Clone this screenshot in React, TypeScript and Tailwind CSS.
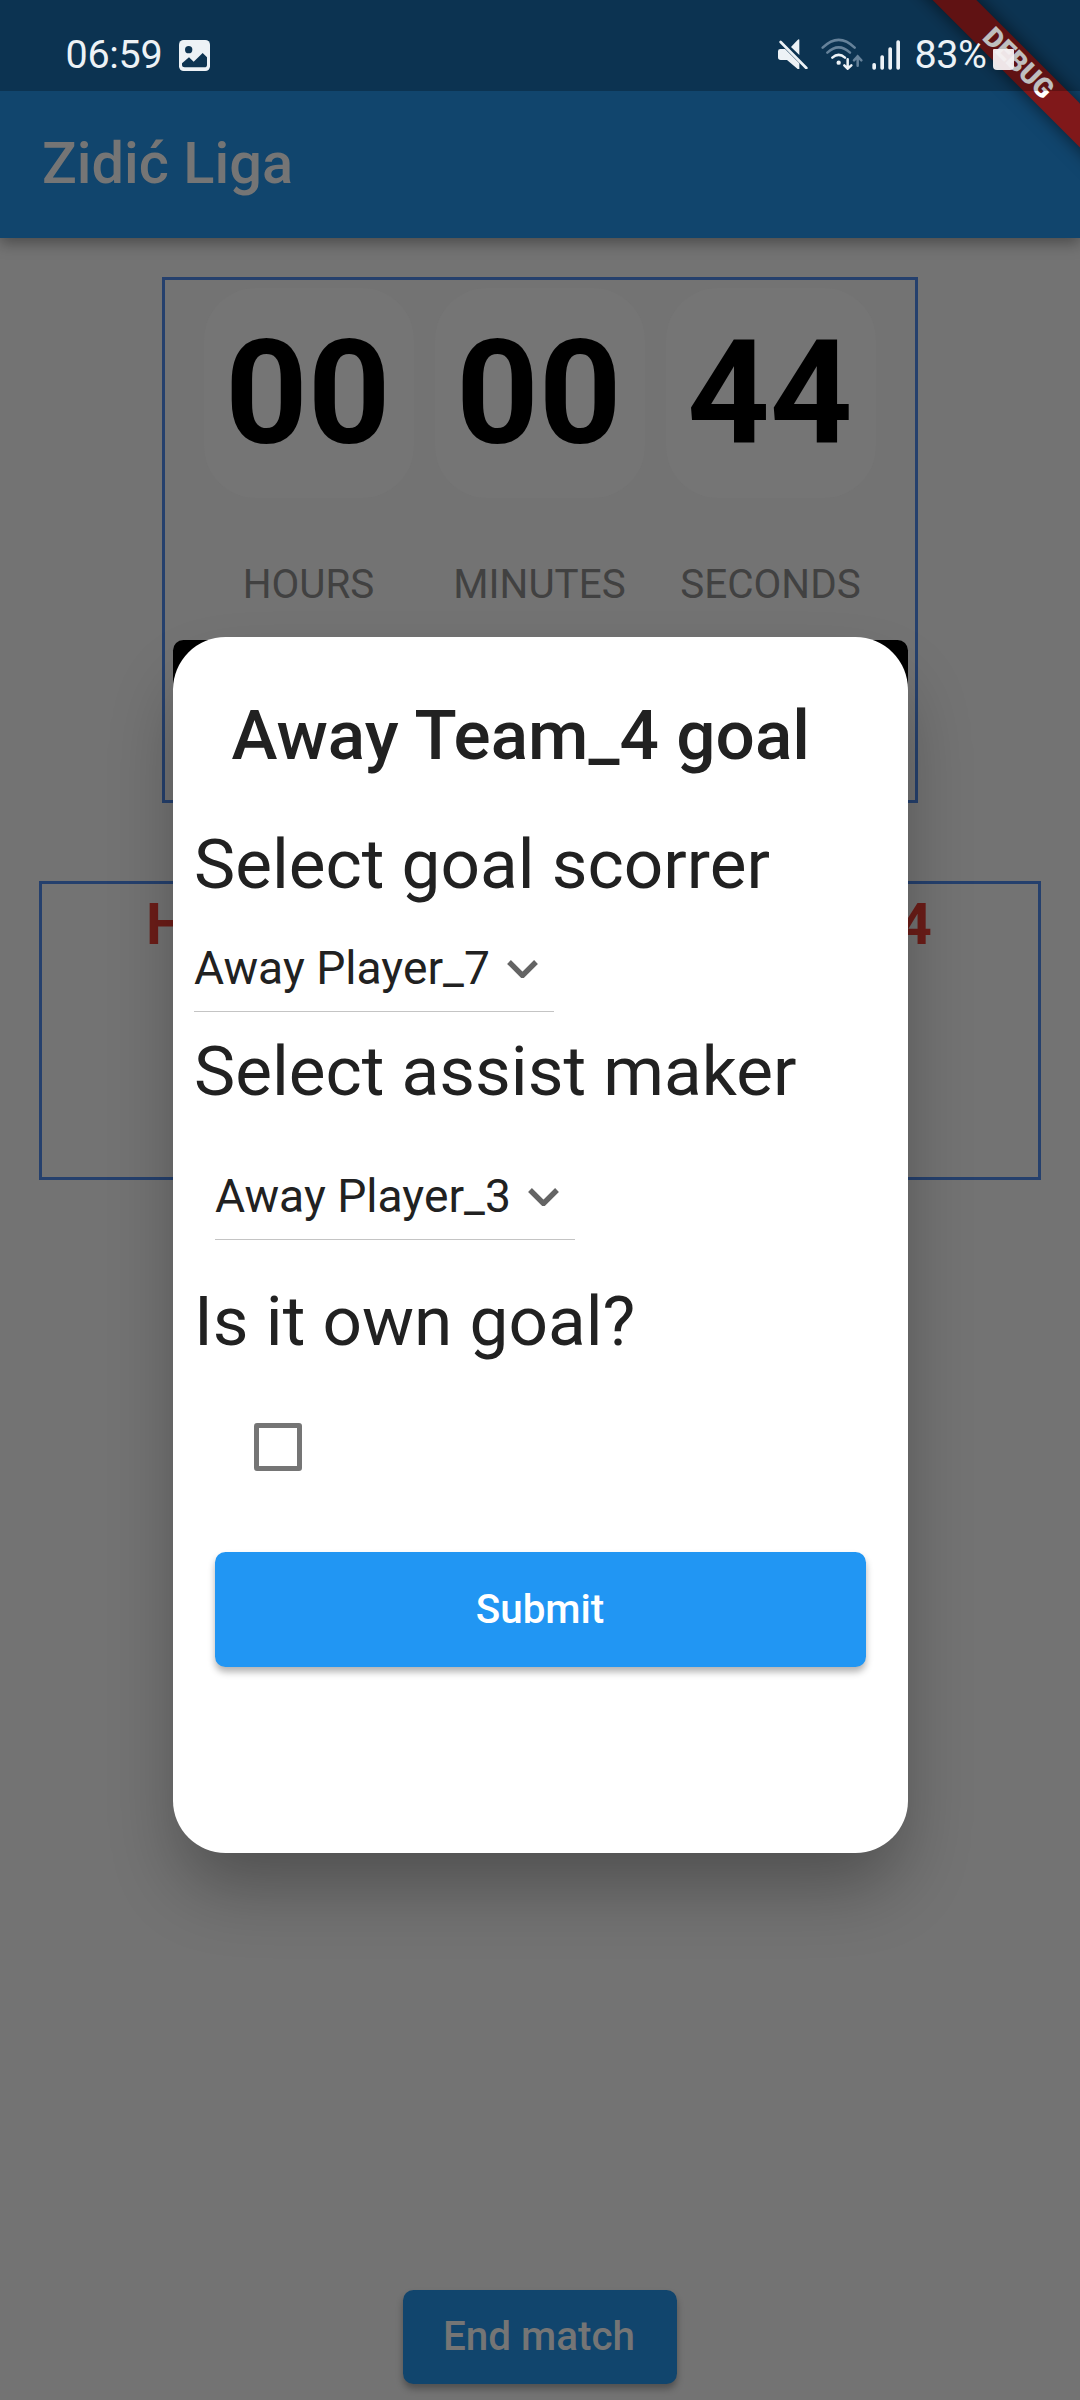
import type { ReactNode } from "react";

function ImageIcon() {
  return (
    <svg className="block h-[31px] w-[31px] shrink-0" viewBox="0 0 93 93">
      <rect width="93" height="93" rx="14" fill="#edf2f6" />
      <circle cx="29" cy="29" r="11" fill="#0d3452" />
      <path d="M9 70 L30 52 L44 65 L71 39 L84 52 V74 Q84 82 76 82 H17 Q9 82 9 76Z" fill="#0d3452" />
    </svg>
  );
}

function MuteIcon() {
  return (
    <svg className="block h-[30px] w-[30px] shrink-0" viewBox="114 117 90 90" fill="#edf2f6">
      <path d="M114 154 q0 -7 7 -7 h14 L178 190 V207 h-5 L141 180 H122 q-8 0 -8 -8Z" />
      <path d="M178 118 V165 L153 141 L172 121 Q178 115 178 120Z" />
      <path d="M122 126 L199 204" stroke="#edf2f6" strokeWidth="8" strokeLinecap="round" />
    </svg>
  );
}

function WifiIcon() {
  return (
    <svg className="block h-[32px] w-[42px] shrink-0" viewBox="244 115 126 96" fill="none" strokeWidth="7.5" strokeLinecap="round">
      <g stroke="#66829a">
        <path d="M249 144 Q297 97 345 144" />
        <path d="M263 159 Q297 127 331 159" />
        <path d="M354 198 V170 M343 182 L354 170 L365 182" />
      </g>
      <g stroke="#edf2f6">
        <path d="M278 174 Q297 157 316 174" />
        <path d="M324 179 V206 M314 197 L324 207 L335 197" />
      </g>
      <circle cx="297" cy="189" r="6.5" fill="#edf2f6" />
    </svg>
  );
}

function SignalIcon() {
  return (
    <svg className="block h-[30px] w-[28px] shrink-0" viewBox="396 119 84 90" fill="#edf2f6">
      <rect x="397" y="188" width="11" height="20" rx="5" />
      <rect x="421" y="165" width="11" height="43" rx="5" />
      <rect x="445" y="141" width="11" height="67" rx="5" />
      <rect x="469" y="120" width="11" height="88" rx="5" />
    </svg>
  );
}

function StatusBar() {
  return (
    <header className="absolute inset-x-0 top-0 z-20 flex h-[91px] bg-black/25 text-[39.5px] leading-[40px] text-[#edf2f6]">
      <span className="ml-[65.5px] mt-[34.5px] w-[99px] whitespace-nowrap tracking-[-0.3px]">06:59</span>
      <div className="ml-[14.5px] mt-[40px]"><ImageIcon /></div>
      <div className="ml-[568px] mt-[39px]"><MuteIcon /></div>
      <div className="ml-[13px] mt-[38px]"><WifiIcon /></div>
      <div className="ml-[9px] mt-[40px]"><SignalIcon /></div>
      <span className="ml-[14.5px] mt-[34.5px] w-[74.5px] whitespace-nowrap tracking-[-0.4px]">83%</span>
      <div className="ml-[4px] mt-[49px] h-[21px] w-[21px] rounded-b-[4px] rounded-t-[1px] bg-[#f6f1f2]/95" />
    </header>
  );
}

function DebugBanner() {
  return (
    <div className="absolute right-0 top-0 z-10 h-[190px] w-[240px] overflow-hidden">
      <div className="absolute left-[27px] top-[46.5px] flex h-[31px] w-[300px] rotate-45 items-center justify-center bg-[#80181a] pl-[3px] text-[27.2px] font-black leading-none text-white shadow-[0_0_18px_rgba(0,0,0,0.6)]">
        DEBUG
      </div>
    </div>
  );
}

function TimeUnit({ value, label }: { value: string; label: string }) {
  return (
    <div className="flex w-[210px] flex-col items-center">
      <div className="flex h-[210px] w-full items-center justify-center rounded-[52px] bg-[#757575] pr-[2.5px] pt-[2.5px] text-[144.4px] font-bold leading-[170px] text-black">
        {value}
      </div>
      <span className="mt-[63px] pr-[1px] text-[40.4px] leading-[48px] text-[#414141]">{label}</span>
    </div>
  );
}

function Dropdown({ children, className }: { children: ReactNode; className: string }) {
  return (
    <div className={`flex h-[87px] w-[360px] items-center border-b-[1.4px] border-[#c4c4c4] text-[46.2px] leading-[54px] ${className}`}>
      <span className="w-[313px] whitespace-nowrap">{children}</span>
      <svg className="h-[20px] w-[31px] shrink-0" viewBox="0 0 31 20">
        <path d="M2 4 L15.5 17.5 L29 4" fill="none" stroke="#646464" strokeWidth="5.4" />
      </svg>
    </div>
  );
}

function GoalDialog() {
  return (
    <section className="absolute left-[172.5px] top-[637.3px] z-10 flex h-[1216px] w-[735px] flex-col rounded-[52.5px] bg-white px-[21.5px] text-[69.3px] leading-[80px] text-[#212121] shadow-[0_40px_70px_-8px_rgba(0,0,0,0.31)]">
      <h2 className="ml-[37.5px] mt-[59px] whitespace-nowrap font-medium tracking-[0.05px]">Away Team_4 goal</h2>
      <p className="mt-[48.7px] whitespace-nowrap">Select goal scorrer</p>
      <Dropdown className="mt-[20px]">Away Player_7</Dropdown>
      <p className="mt-[20px] whitespace-nowrap">Select assist maker</p>
      <Dropdown className="ml-[21px] mt-[41px]">Away Player_3</Dropdown>
      <p className="mt-[42.3px] whitespace-nowrap">Is it own goal?</p>
      <div className="ml-[60.3px] mt-[61px] h-[47.4px] w-[47.4px] rounded-[3px] border-[5.25px] border-[#757575]" />
      <button className="mx-[20.5px] mt-[81px] flex h-[115.3px] items-center justify-center rounded-[10.5px] bg-[#2196f3] pt-[2px] text-[40.4px] font-medium leading-[48px] text-white shadow-[0_5px_7px_rgba(0,0,0,0.3)]">
        Submit
      </button>
    </section>
  );
}

export default function App() {
  return (
    <div className="relative flex h-[2400px] w-[1080px] flex-col items-center overflow-hidden bg-[#737373] font-['Roboto',sans-serif]">
      <StatusBar />
      <DebugBanner />
      <div className="flex h-[238px] w-full shrink-0 items-center bg-[#11456d] pl-[42px] pt-[88px] text-[57.75px] font-medium leading-[70px] text-[#757575] shadow-[0_5px_14px_rgba(0,0,0,0.35)]">
        Zidić Liga
      </div>
      <main className="mt-[39px] flex w-full flex-col items-center">
        <section className="flex h-[525.5px] w-[756px] flex-col items-center border-[3px] border-[#25406d] pt-[8px]">
          <div className="flex gap-[21px]">
            <TimeUnit value="00" label="HOURS" />
            <TimeUnit value="00" label="MINUTES" />
            <TimeUnit value="44" label="SECONDS" />
          </div>
          <div className="mt-[30.5px] h-[126px] w-[735px] shrink-0 rounded-[10.5px] bg-black" />
        </section>
        <section className="mt-[78.5px] flex h-[299px] w-[1002px] items-start justify-between border-[3px] border-[#25406d] pl-[104px] pr-[106px] pt-[6px] text-[57.75px] font-bold leading-[68px] text-[#6c1d18]">
          <span>Home</span>
          <span>Team_4</span>
        </section>
      </main>
      <button className="mb-[16px] mt-auto flex h-[94px] w-[274px] shrink-0 items-center justify-center rounded-[10.5px] bg-[#11456d] pr-[2px] text-[40.4px] font-medium leading-[48px] text-[#757575] shadow-[0_5px_7px_rgba(0,0,0,0.3)]">
        End match
      </button>
      <GoalDialog />
    </div>
  );
}
